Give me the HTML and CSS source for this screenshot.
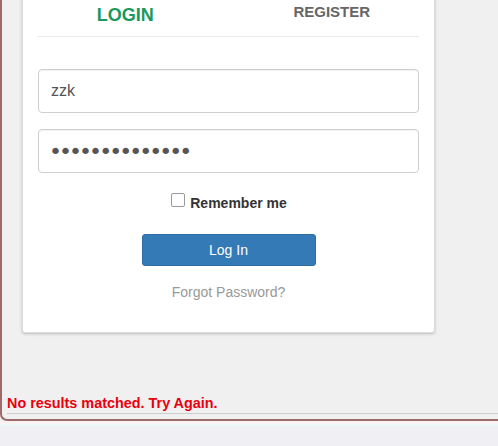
FILE: index.html
```html
<!DOCTYPE html>
<html>
<head>
<meta charset="utf-8">
<link rel="stylesheet" href="styles.css">
</head>
<body>
<div class="panel">
  <div class="card">
    <div class="tabs">
      <div class="tab tab-login">LOGIN</div>
      <div class="tab tab-register">REGISTER</div>
    </div>
    <form class="form">
      <input class="field" type="text" value="zzk">
      <input class="field field-pass" type="password" value="abcdefghijklmn">
      <label class="remember"><input class="check" type="checkbox"><span>Remember me</span></label>
      <button class="btn" type="button">Log In</button>
      <div class="forgot">Forgot Password?</div>
    </form>
  </div>
  <div class="error">No results matched. Try Again.</div>
</div>
<div class="strip"></div>
</body>
</html>
```

FILE: styles.css
```css
html, body {
  margin: 0;
  padding: 0;
}
body {
  background: #f0eff4;
  font-family: "Liberation Sans", Arial, sans-serif;
  overflow: hidden;
}
.panel {
  box-sizing: border-box;
  height: 421px;
  background: #f0f0f0;
  border-left: 2px solid #9e6a6a;
  border-bottom: 2px solid #9e6a6a;
  border-bottom-left-radius: 7px;
  display: flex;
  flex-direction: column;
  padding-bottom: 5px;
}
.card {
  margin-top: -10px;
  margin-left: 20px;
  width: 413px;
  box-sizing: border-box;
  background: #fff;
  border: 1px solid #dcdcdc;
  border-radius: 3px;
  box-shadow: 0 1px 3px rgba(0, 0, 0, 0.22);
  padding: 0 15px 30px;
}
.tabs {
  display: flex;
  height: 45px;
  border-bottom: 1px solid #ebebeb;
}
.tab {
  flex: 1;
  text-align: center;
  font-weight: bold;
}
.tab-login {
  color: #19985a;
  font-size: 18px;
  line-height: 20px;
  padding-top: 14px;
  padding-right: 14px;
}
.tab-register {
  color: #666;
  font-size: 15px;
  line-height: 18px;
  padding-top: 12px;
  padding-left: 18px;
}
.form {
  display: flex;
  flex-direction: column;
  align-items: center;
  margin: 0;
}
.field {
  box-sizing: border-box;
  width: 100%;
  height: 44px;
  margin: 32px 0 0;
  padding: 0 12px;
  border: 1px solid #cfcfcf;
  border-radius: 4px;
  box-shadow: inset 0 1px 1px rgba(0, 0, 0, 0.06);
  font-family: "Liberation Sans", Arial, sans-serif;
  font-size: 16px;
  color: #555;
  background: #fff;
  outline: none;
}
.field-pass {
  margin-top: 16px;
  font-family: "DejaVu Sans", sans-serif;
  font-size: 22px;
  letter-spacing: -2.95px;
  padding-left: 10px;
  color: #555;
}
.remember {
  display: flex;
  align-items: center;
  margin-top: 20px;
  height: 20px;
  font-size: 14px;
  font-weight: bold;
  color: #333;
  padding-left: 1px;
}
.check {
  appearance: none;
  -webkit-appearance: none;
  width: 14px;
  height: 14px;
  margin: 0 5px 0 0;
  border: 1px solid #9a9a9a;
  border-radius: 2px;
  background: #fff;
  position: relative;
  top: -3px;
}
.btn {
  margin-top: 21px;
  width: 174px;
  height: 32px;
  background: #337ab7;
  border: 1px solid #2e6da4;
  border-radius: 3px;
  color: #fff;
  font-family: "Liberation Sans", Arial, sans-serif;
  font-size: 14px;
  padding: 0;
}
.forgot {
  margin-top: 16px;
  font-size: 14px;
  line-height: 20px;
  color: #999;
}
.error {
  margin-top: auto;
  margin-left: 5px;
  padding-bottom: 1px;
  border-bottom: 1px solid #cccccc;
  font-size: 14.4px;
  line-height: 17px;
  font-weight: bold;
  color: #e8000e;
}
.strip {
  height: 3px;
  background: #fbf2f4;
  border-bottom: 3px solid #edf5f5;
}
```
